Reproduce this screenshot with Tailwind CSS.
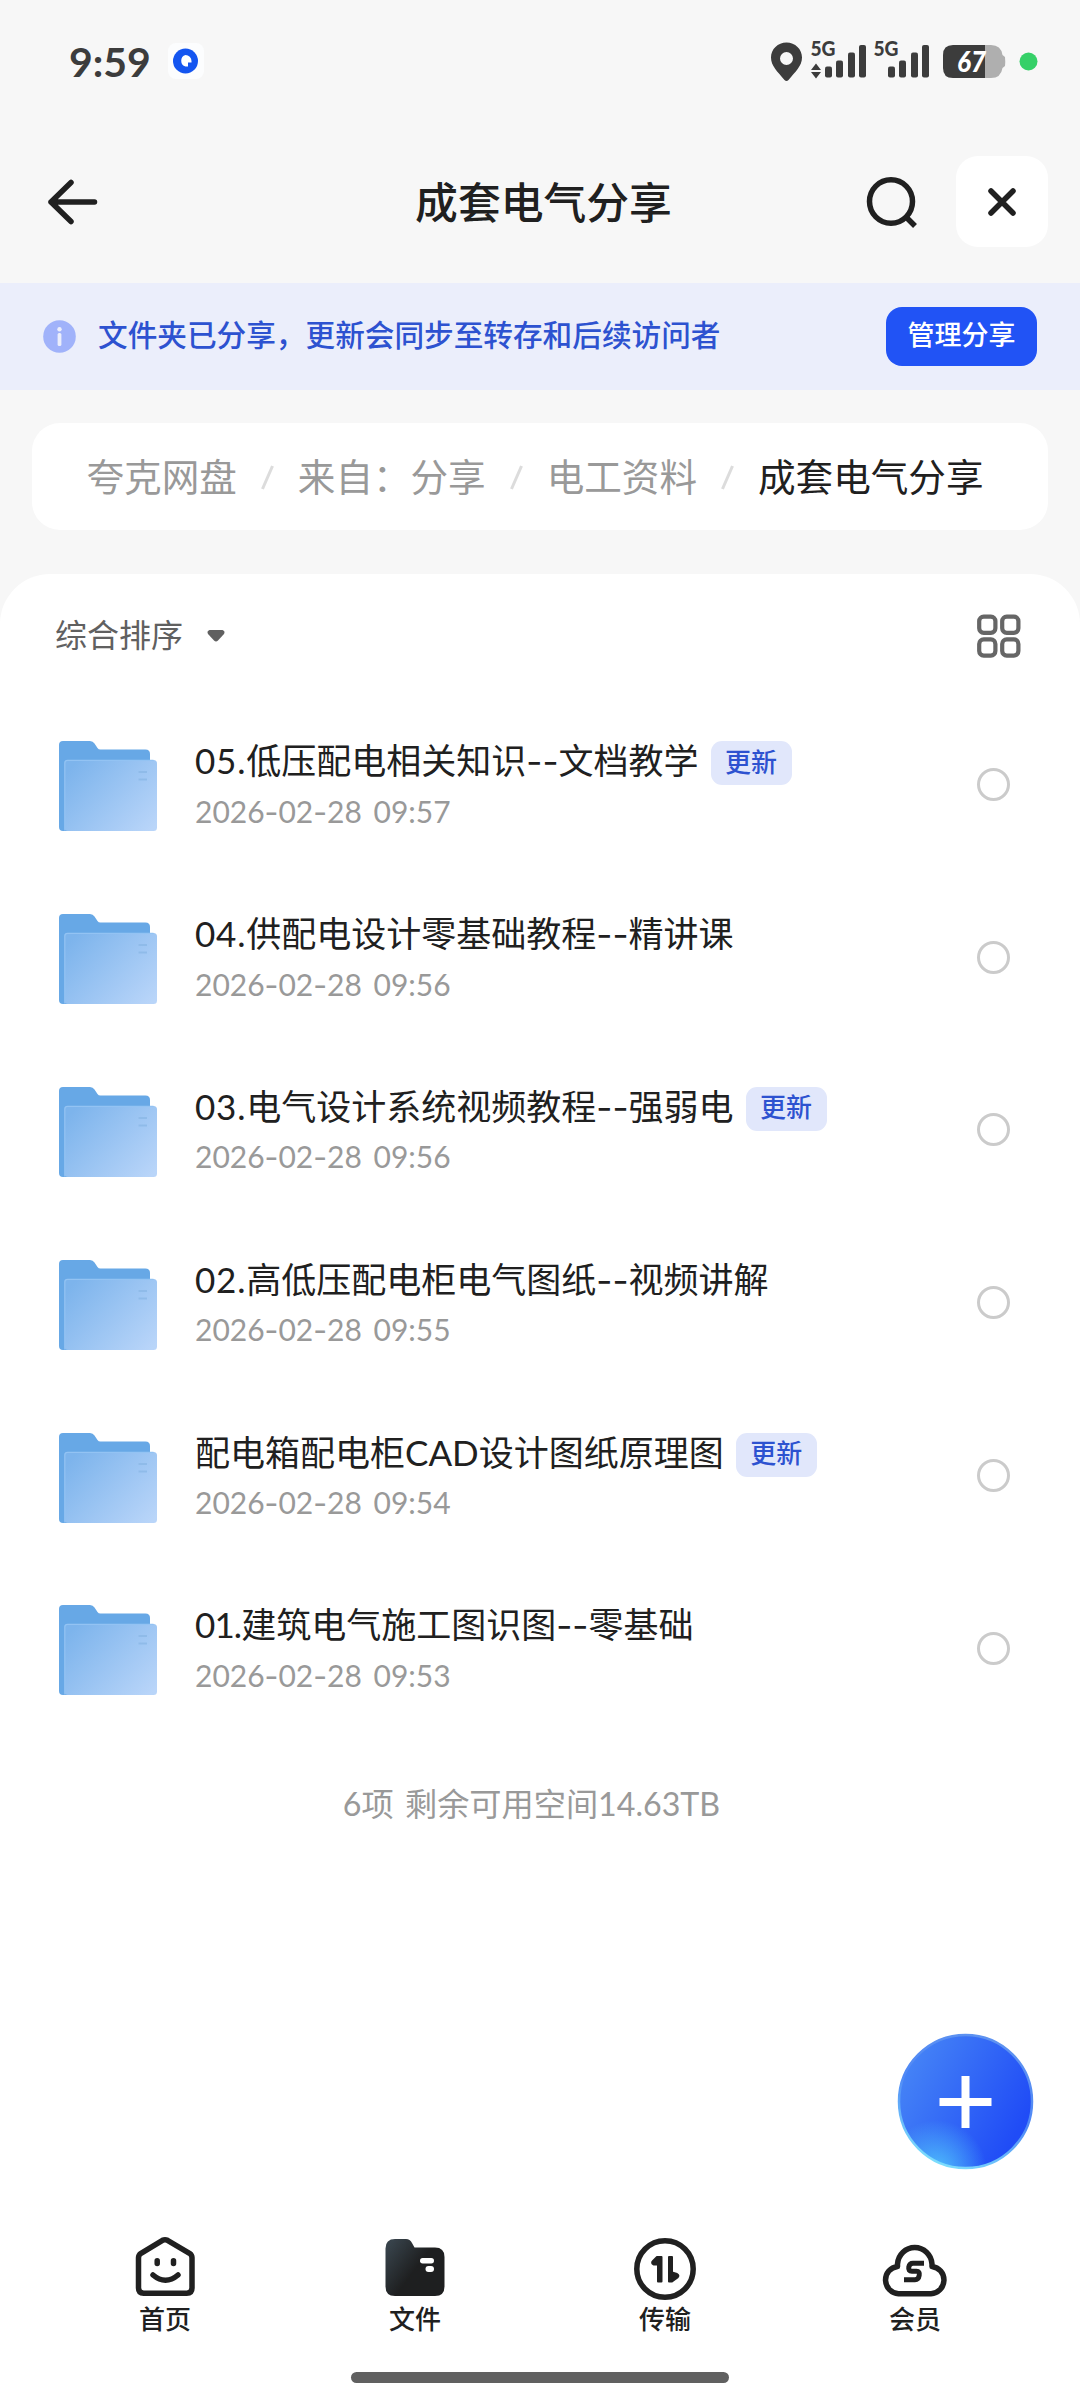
<!DOCTYPE html>
<html lang="zh-CN">
  <head>
    <meta charset="UTF-8" />
    <meta name="viewport" content="width=device-width, initial-scale=1.0" />
    <title>成套电气分享</title>
    <script src="https://cdn.jsdelivr.net/npm/@tailwindcss/browser@4"></script>
  </head>
  <body class="bg-[#f7f7f7]">
    <div class="relative flex h-[2403px] w-[1080px] flex-col overflow-hidden font-['Lato','Noto_Sans_CJK_SC',sans-serif] text-[#202020]">
      <!-- status bar -->
      <div class="flex h-[124px] shrink-0 items-center justify-between pl-[69px] pr-[42px]">
        <div class="-mt-[2px] flex items-center gap-[17px]">
          <span class="text-[41px] leading-[41px] font-bold text-[#3c3c3c]">9:59</span>
          <svg class="h-[36px] w-[36px]" viewBox="0 0 36 36">
            <rect width="36" height="36" rx="8" fill="#fcfdfe" />
            <circle cx="17.500" cy="18" r="12.500" fill="#1455f0" />
            <path d="M17.500 12a6 6 0 0 1 6 6v1.500h-3.500v4h-2.500a6 6 0 0 1 0-11.500z" fill="#fff" />
          </svg>
        </div>
        <svg class="h-[64px] w-[267px]" viewBox="0 -10 267 64" fill="#3c3c3c">
          <path fill-rule="evenodd" d="M15.500 2.500C6.800 2.500 0 9.200 0 17.500c0 8.500 6.500 14 13.500 22.500q2 2 4 0C24.500 31.500 31 26 31 17.500 31 9.200 24.200 2.500 15.500 2.500zm0 9.500a6.500 6.500 0 1 1 0 13 6.500 6.500 0 0 1 0-13z" />
          <text x="39.500" y="16" font-size="20.500" font-weight="900" textLength="25" lengthAdjust="spacingAndGlyphs">5G</text>
          <path d="M45 23.500l5 6.500h-10zM45 38.500l5-6.500h-10z" />
          <rect x="54" y="26.500" width="7" height="11" rx="2" />
          <rect x="65" y="20.500" width="7" height="17" rx="2" />
          <rect x="77" y="12.500" width="7" height="25" rx="2" />
          <rect x="88" y="5" width="7" height="32.500" rx="2" />
          <text x="102.500" y="16" font-size="20.500" font-weight="900" textLength="25" lengthAdjust="spacingAndGlyphs">5G</text>
          <rect x="117" y="26.500" width="7" height="11" rx="2" />
          <rect x="128" y="20.500" width="7" height="17" rx="2" />
          <rect x="140" y="12.500" width="7" height="25" rx="2" />
          <rect x="151" y="5" width="7" height="32.500" rx="2" />
          <path d="M214 5h6q10 0 11.500 10l2.500 2q.5 4.500 0 9l-2.500 2q-1.500 10-11.500 10h-6z" fill="#afafaf" />
          <path d="M182 5h32v33h-32q-10 0-10-10v-13q0-10 10-10z" />
          <text x="186" y="31.500" font-size="28" font-weight="900" font-style="italic" fill="#fff" textLength="29" lengthAdjust="spacingAndGlyphs">67</text>
          <circle cx="257.500" cy="21.500" r="9" fill="#36d068" />
        </svg>
      </div>

      <!-- header -->
      <div class="flex h-[159px] shrink-0 items-start justify-between pt-[32px] pl-[46px] pr-[32px]">
        <div class="flex h-[91px] w-[170px] items-center">
          <svg class="h-[54px] w-[54px]" viewBox="0 0 54 54" fill="none" stroke="#202020" stroke-width="5.500" stroke-linecap="round" stroke-linejoin="round">
            <path d="M5 27h43.500M25 7.500L5 27l20 19.500" />
          </svg>
        </div>
        <h1 class="mt-[1px] pl-[6px] text-[42.800px] leading-[91px] font-medium">成套电气分享</h1>
        <div class="flex h-[91px] items-center gap-[37px]">
          <svg class="h-[54px] w-[54px]" viewBox="0 0 54 54" fill="none" stroke="#202020" stroke-width="5.500">
            <ellipse cx="26" cy="26.500" rx="21.500" ry="21.700" />
            <path d="M40.500 41.500l9.500 9.500" />
          </svg>
          <div class="flex h-[91px] w-[92px] items-center justify-center rounded-[22px] bg-white">
            <svg class="h-[32px] w-[32px]" viewBox="0 0 32 32" stroke="#202020" stroke-width="5.500" stroke-linecap="round">
              <path d="M5 5l22 22M27 5L5 27" />
            </svg>
          </div>
        </div>
      </div>

      <!-- share banner -->
      <div class="flex h-[107px] shrink-0 items-center bg-[#ebeefb] pl-[43px] pr-[43px]">
        <svg class="h-[33px] w-[33px]" viewBox="0 0 33 33">
          <circle cx="16.500" cy="16.500" r="16.300" fill="#a0b2fa" />
          <circle cx="16.500" cy="9.200" r="2.200" fill="#ebeefb" />
          <rect x="14.600" y="13" width="3.800" height="13" rx="1.500" fill="#ebeefb" />
        </svg>
        <p class="ml-[22px] -mt-[4px] text-[29.650px] leading-[40px] font-medium whitespace-nowrap text-[#2d52d0]">文件夹已分享，更新会同步至转存和后续访问者</p>
        <button class="ml-auto h-[59px] w-[151px] rounded-[16px] bg-[#2153f5] pb-[3px] text-[27px] leading-[56px] font-medium text-white">管理分享</button>
      </div>

      <!-- breadcrumb -->
      <div class="mx-[32px] mt-[33px] flex h-[107px] shrink-0 items-center rounded-[28px] bg-white pl-[54.500px] text-[37.600px] leading-[107px] whitespace-nowrap text-[#999]">
        <span>夸克网盘</span>
        <svg class="h-[26px] w-[61px]" viewBox="0 0 61 26"><path d="M25.500 25L35.500 2" stroke="#dcdcdc" stroke-width="3" /></svg>
        <span>来自：分享</span>
        <svg class="h-[26px] w-[61px]" viewBox="0 0 61 26"><path d="M25.500 25L35.500 2" stroke="#dcdcdc" stroke-width="3" /></svg>
        <span>电工资料</span>
        <svg class="h-[26px] w-[61px]" viewBox="0 0 61 26"><path d="M25.500 25L35.500 2" stroke="#dcdcdc" stroke-width="3" /></svg>
        <span class="text-[#202020]">成套电气分享</span>
      </div>

      <div class="mt-[44px] flex flex-1 flex-col rounded-t-[50px] bg-white">
        <div class="flex h-[124px] shrink-0 items-center pl-[55px] pr-[58px]">
          <span class="-mt-[3px] text-[32px] leading-[40px] text-[#606060]">综合排序</span>
          <svg class="ml-[23px] h-[14px] w-[20px]" viewBox="0 0 20 14"><path d="M3.500 1h13q3 1 1.500 4l-6 6.500q-2 2-4 0L2 5q-1.500-3 1.500-4z" fill="#606060" /></svg>
          <svg class="ml-auto h-[46px] w-[46px]" viewBox="0 0 46 46" fill="none" stroke="#666" stroke-width="4.200">
            <rect x="3.200" y="3.600" width="16.200" height="16.200" rx="4.500" />
            <rect x="26.200" y="3.600" width="16.200" height="16.200" rx="4.500" />
            <rect x="3.200" y="26.400" width="16.200" height="16.200" rx="4.500" />
            <rect x="26.200" y="26.400" width="16.200" height="16.200" rx="4.500" />
          </svg>
        </div>

        <ul id="file-list"></ul>

        <p class="mt-[49px] pr-[17px] text-center text-[32.200px] leading-[40px] text-[#999] [word-spacing:3px]">6项 剩余可用空间14.63TB</p>
      </div>

      <!-- bottom nav -->
      <nav class="grid h-[182px] shrink-0 grid-cols-4 bg-white px-[40px] pt-[31px] text-[26px] leading-[34px] font-medium">
        <a class="flex flex-col items-center">
          <svg class="h-[84px] w-[70px]" viewBox="0 0 70 84" fill="none" stroke="#202020" stroke-width="5.500" stroke-linecap="round" stroke-linejoin="round">
            <path d="M32.500 19.300q2.500-1.300 5 0l22 13q2.500 1.600 2.500 4.500V67q0 5.200-5.200 5.200H13.700Q8.500 72.200 8.500 67V36.800q0-2.900 2.500-4.500z" />
            <path d="M27.200 39.800v2.800M43.500 39.800v2.800" />
            <path d="M23 54q12.500 10.500 25 0" />
          </svg>
          <span class="-mt-[3px]">首页</span>
        </a>
        <a class="flex flex-col items-center">
          <svg class="h-[84px] w-[70px]" viewBox="0 0 70 84">
            <defs>
              <linearGradient id="nav-folder" x1="0" y1="0.200" x2="0.700" y2="0.700">
                <stop offset="0" stop-color="#37424a" />
                <stop offset="0.700" stop-color="#1e1f20" />
              </linearGradient>
            </defs>
            <path d="M15 18h11q4 0 6 4l2.500 4.500H55q9.500 0 9.500 9.500v29.500q0 9.500-9.500 9.500H15q-9.500 0-9.500-9.500V27.500Q5.500 18 15 18z" fill="url(#nav-folder)" />
            <rect x="40" y="37" width="14" height="5.500" rx="2.700" fill="#fff" />
            <rect x="45.500" y="45" width="8.500" height="6" rx="3" fill="#fff" />
          </svg>
          <span class="-mt-[3px]">文件</span>
        </a>
        <a class="flex flex-col items-center">
          <svg class="h-[84px] w-[70px]" viewBox="0 0 70 84" fill="none" stroke="#202020">
            <circle cx="35" cy="48" r="28.200" stroke-width="5.500" />
            <g fill="#202020" stroke-width="2" stroke-linejoin="round">
              <path d="M27 36h4.500v24.500H28V43.500h-4.500q-2.500-1.500-.5-3.500z" />
              <path d="M39 36h3v15.500l5 1.500q2.500 1.500.5 3.500L42 60.500h-3z" />
            </g>
          </svg>
          <span class="-mt-[3px]">传输</span>
        </a>
        <a class="flex flex-col items-center">
          <svg class="h-[84px] w-[70px]" viewBox="0 0 70 84" fill="none" stroke="#202020" stroke-linejoin="round">
            <path d="M18.500 72.700A13.500 13.700 0 0 1 17.500 45.400V43A17.300 17.800 0 0 1 52 43V45.400A13.500 13.700 0 0 1 51 72.700z" stroke-width="5.500" />
            <path d="M44 42.200H33q-3.500 0-4.200 3.800-.8 4.200 3.200 4.200h4.500q3.500 0 2.700 4.200-.7 4.300-4.200 4.300H24" stroke-width="5" />
          </svg>
          <span class="-mt-[3px]">会员</span>
        </a>
      </nav>
      <div class="flex h-[31px] shrink-0 justify-center bg-white">
        <div class="h-[11px] w-[378px] rounded-full bg-[#606060]"></div>
      </div>

      <!-- floating add button -->
      <button class="absolute top-[2033px] left-[897px] h-[137px] w-[137px]">
        <svg viewBox="0 0 137 137">
          <defs>
            <linearGradient id="fab" x1="0.050" y1="0.250" x2="0.900" y2="0.700">
              <stop offset="0" stop-color="#4583f6" />
              <stop offset="1" stop-color="#204cf6" />
            </linearGradient>
            <radialGradient id="fab-glow" cx="0.280" cy="1.020" r="0.380">
              <stop offset="0" stop-color="#4fc0fc" />
              <stop offset="1" stop-color="#4fc0fc" stop-opacity="0" />
            </radialGradient>
            <linearGradient id="fab-rim" x1="0.700" y1="0" x2="0.300" y2="1">
              <stop offset="0" stop-color="#5f93f0" />
              <stop offset="0.500" stop-color="#4f88f6" />
              <stop offset="1" stop-color="#7fe2fd" />
            </linearGradient>
          </defs>
          <circle cx="68.500" cy="68.500" r="67" fill="url(#fab)" />
          <circle cx="68.500" cy="68.500" r="67" fill="url(#fab-glow)" />
          <circle cx="68.500" cy="68.500" r="66.500" fill="none" stroke="url(#fab-rim)" stroke-width="2.500" />
          <path d="M68.500 43v52M42.500 69h52" stroke="#fff" stroke-width="8" />
        </svg>
      </button>
    </div>

    <!-- gradients shared by all folder icons -->
    <svg class="absolute h-0 w-0">
      <defs>
        <linearGradient id="folder-front" x1="0" y1="0.200" x2="1" y2="0.900">
          <stop offset="0" stop-color="#7db4ec" />
          <stop offset="1" stop-color="#b9d5f9" />
        </linearGradient>
      </defs>
    </svg>
  </body>
  <script>
    const files = [
      { name: "05.低压配电相关知识--文档教学", time: "2026-02-28 09:57", updated: true },
      { name: "04.供配电设计零基础教程--精讲课", time: "2026-02-28 09:56" },
      { name: "03.电气设计系统视频教程--强弱电", time: "2026-02-28 09:56", updated: true },
      { name: "02.高低压配电柜电气图纸--视频讲解", time: "2026-02-28 09:55" },
      { name: "配电箱配电柜CAD设计图纸原理图", time: "2026-02-28 09:54", updated: true },
      { name: "01.建筑电气施工图识图--零基础", time: "2026-02-28 09:53" },
    ];

    const list = document.getElementById("file-list");

    // the hyphen is too short in Lato
    const hyphens = (text) =>
      text.replace(/-+/g, (m) => `<span class="font-['Inter']">${m}</span>`);

    // "01." is set tighter than the other numbers
    const title = (text) =>
      hyphens(text).replace(/^\d+\./, (m) =>
        m === "01."
          ? `<span class="tracking-[-0.9px]">${m}</span>`
          : `<span class="tracking-[0.8px]">${m}</span>`
      );

    files.forEach((file) => {
      list.innerHTML += `
        <li class="flex h-[172.800px] items-center pl-[58px] pr-[70px]">
          <svg class="mt-[4px] h-[92px] w-[100px]" viewBox="0 0 100 92">
            <path d="M5 1h27q3 0 4.500 2.500l3 4.500q1 1.500 3 1.500h45q4.500 0 4.500 4.500v73q0 4-4 4H5q-4 0-4-4V5q0-4 4-4z" fill="#67a8e6" />
            <rect x="6.500" y="20" width="92.500" height="71" rx="3.500" fill="url(#folder-front)" />
            <path d="M6.800 90.500V23q0-2.700 2.700-2.700h86" fill="none" stroke="#93c3f3" stroke-width="1.200" />
            <path d="M80.500 32h8.500M80.500 39.500h8.500" stroke="#8fbbe9" stroke-width="2.200" />
          </svg>
          <div class="ml-[37px] flex flex-col">
            <div class="flex h-[48px] items-center">
              <span class="text-[35px] leading-[48px] whitespace-nowrap">${title(file.name)}</span>
              ${file.updated ? `<span class="mt-[5px] ml-[12px] flex h-[44px] w-[81px] items-center justify-center rounded-[11px] bg-[#e1e7fb] pb-[3px] text-[26px] leading-[36px] font-medium text-[#2d52d0]">更新</span>` : ""}
            </div>
            <span class="mt-[6px] text-[30px] leading-[40px] whitespace-nowrap text-[#999] [word-spacing:4px]">${hyphens(file.time)}</span>
          </div>
          <div class="ml-auto h-[33px] w-[33px] rounded-full border-3 border-[#cbcbcb]"></div>
        </li>`;
    });
  </script>
</html>
